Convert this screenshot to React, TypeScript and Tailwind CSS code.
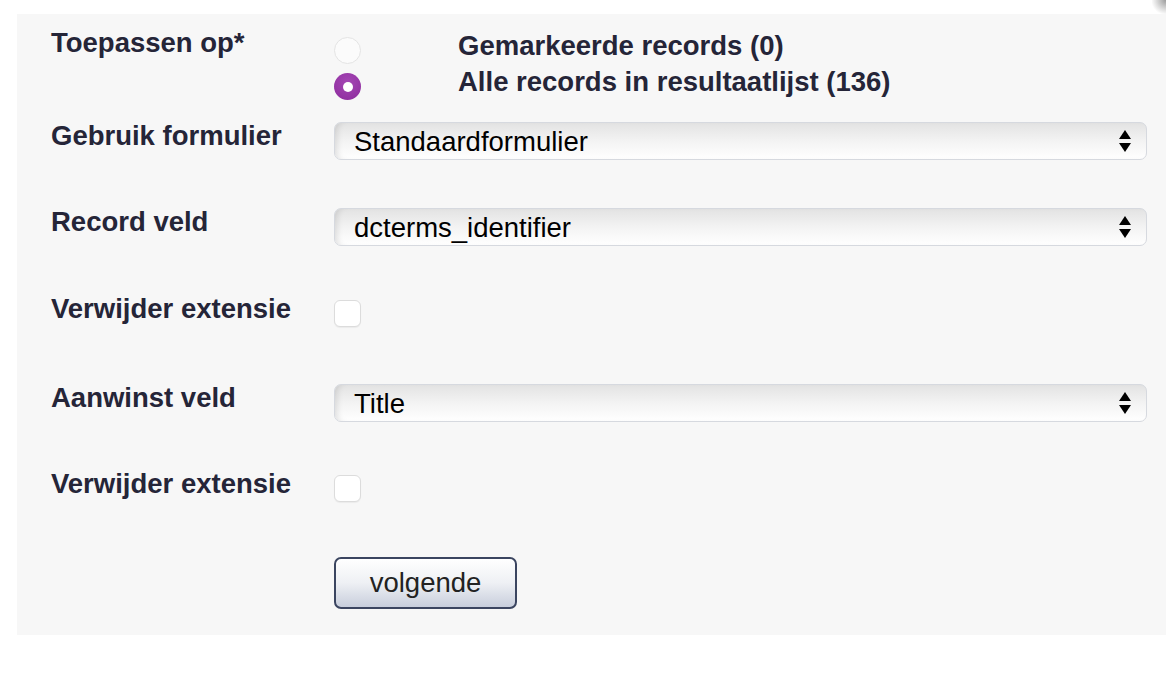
import React from "react";

const font = { fontFamily: '"Liberation Sans", Arial, Helvetica, sans-serif' };

function Label({ children }: { children: React.ReactNode }) {
  return (
    <div className="w-[283px] shrink-0 text-[27.5px] leading-[36px] font-bold text-[#252538]">
      {children}
    </div>
  );
}

function Arrows() {
  return (
    <svg width="14" height="24" viewBox="0 0 14 24" className="shrink-0">
      <path d="M7 1 L13 10 L1 10 Z" fill="#000" />
      <path d="M1 14 L13 14 L7 23 Z" fill="#000" />
    </svg>
  );
}

function Select({ value }: { value: string }) {
  return (
    <div className="mt-[4px] flex h-[38px] w-[813px] items-center justify-between rounded-[7px] border border-[#d6d9df] bg-gradient-to-b from-[#e3e3e3] via-[#f3f3f3] to-white pl-[19px] pr-[14px] shadow-[inset_6px_0_6px_-4px_rgba(0,0,0,0.12)]">
      <span className="pt-[1px] text-[27.5px] leading-[36px] text-black">{value}</span>
      <Arrows />
    </div>
  );
}

function Checkbox() {
  return (
    <div className="mt-[9px] h-[27px] w-[27px] rounded-[6px] border border-[#dcdcdc] bg-white shadow-[0_1px_1px_rgba(0,0,0,0.05)]" />
  );
}

export default function App() {
  return (
    <div className="relative min-h-[700px] w-[1166px] bg-white" style={font}>
      <div className="pointer-events-none absolute right-0 top-0 h-[14px] w-[14px] bg-[radial-gradient(circle_at_100%_0%,rgba(90,90,90,0.6)_0%,rgba(150,150,150,0.3)_50%,rgba(255,255,255,0)_75%)]" />
      <div className="ml-[17px] pt-[14px]">
        <div className="h-[621px] w-[1149px] bg-[#f7f7f7] pl-[34px] pt-[11px]">
          {/* Toepassen op */}
          <div className="flex items-start">
            <Label>Toepassen op*</Label>
            <div className="flex flex-col pt-[3px]">
              <div className="flex items-start">
                <div className="mt-[9px] h-[27px] w-[27px] rounded-full border border-[#e4e4e4] bg-[#fbfbfb]" />
                <span className="ml-[97px] text-[27.5px] leading-[36px] font-bold text-[#252538]">
                  Gemarkeerde records (0)
                </span>
              </div>
              <div className="flex items-start">
                <div className="mt-[9px] flex h-[27px] w-[27px] items-center justify-center rounded-full bg-[radial-gradient(circle_at_50%_35%,#a447b4_0%,#8c2a9c_100%)]">
                  <div className="h-[10px] w-[10px] rounded-full bg-white" />
                </div>
                <span className="ml-[97px] text-[27.5px] leading-[36px] font-bold text-[#252538]">
                  Alle records in resultaatlijst (136)
                </span>
              </div>
            </div>
          </div>

          {/* Gebruik formulier */}
          <div className="mt-[18px] flex items-start">
            <Label>Gebruik formulier</Label>
            <Select value="Standaardformulier" />
          </div>

          {/* Record veld */}
          <div className="mt-[44px] flex items-start">
            <Label>Record veld</Label>
            <Select value="dcterms_identifier" />
          </div>

          {/* Verwijder extensie */}
          <div className="mt-[45px] flex items-start">
            <Label>Verwijder extensie</Label>
            <Checkbox />
          </div>

          {/* Aanwinst veld */}
          <div className="mt-[53px] flex items-start">
            <Label>Aanwinst veld</Label>
            <Select value="Title" />
          </div>

          {/* Verwijder extensie */}
          <div className="mt-[44px] flex items-start">
            <Label>Verwijder extensie</Label>
            <Checkbox />
          </div>

          {/* Button */}
          <div className="mt-[55px] flex">
            <div className="w-[283px] shrink-0" />
            <button className="flex h-[52px] w-[183px] items-center justify-center rounded-[7px] border-2 border-[#3b4560] bg-gradient-to-b from-white via-[#eef0f4] to-[#c8cedc] text-[27.5px] leading-[36px] text-[#222]">
              volgende
            </button>
          </div>
        </div>
      </div>
    </div>
  );
}
